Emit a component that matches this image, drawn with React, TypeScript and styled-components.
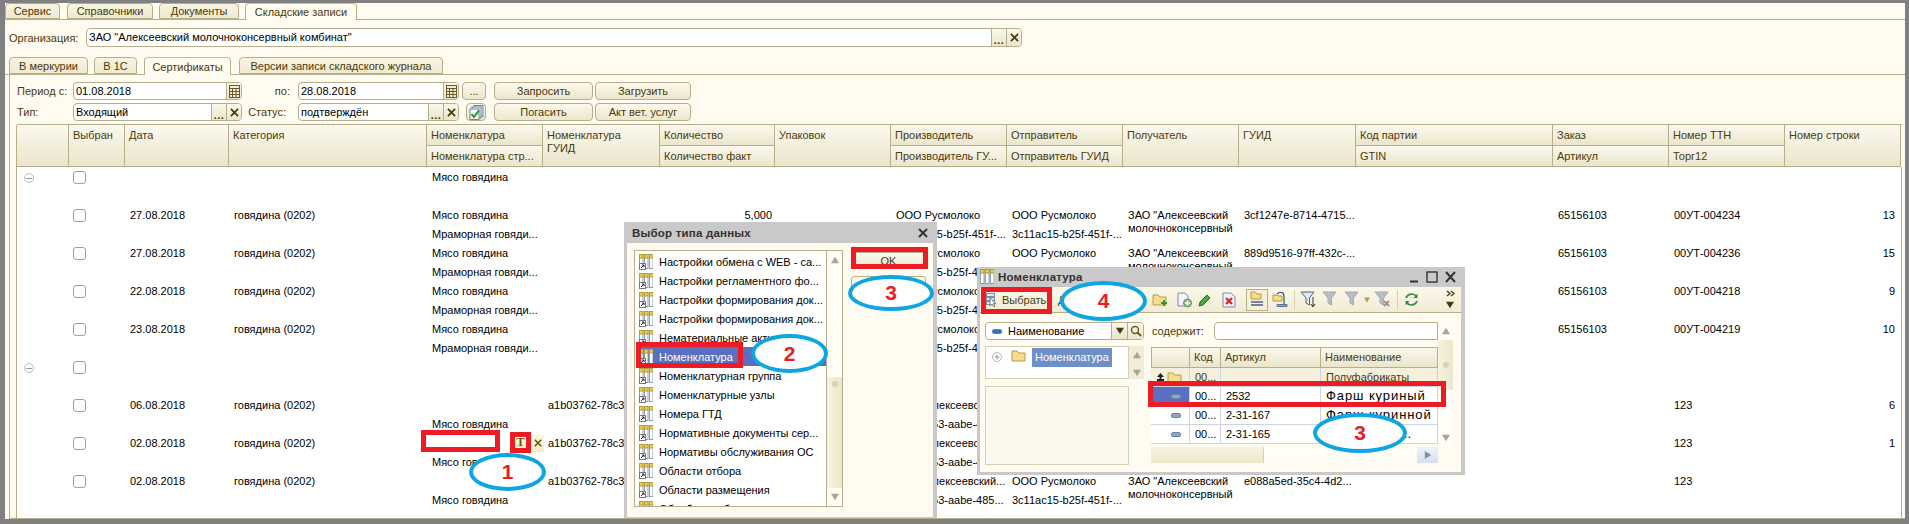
import React from 'react';
import styled, { createGlobalStyle } from 'styled-components';

const GlobalStyle = createGlobalStyle`
    html, body {
        margin: 0;
        padding: 0;
        background: #808080;
    }
    body {
        font-family: "Liberation Sans", Arial, sans-serif;
        font-size: 11px;
        color: #000;
    }
`;

const LINE = '#b7ae8c';
const BROWN = '#4c3a0a';
const CREAM = '#fffbf0';

const Page = styled.div`
    position: relative;
    width: 1909px;
    height: 524px;
    box-sizing: border-box;
    padding: 3px 4px 5px 5px;
    background: #808080;
    display: flex;
    overflow: hidden;
`;

const Panel = styled.div`
    flex: 1;
    min-width: 0;
    background: ${CREAM};
    display: flex;
    flex-direction: column;
`;

const TabStrip = styled.div<{ $indent?: number; $height: number }>`
    display: flex;
    align-items: flex-end;
    height: ${(p) => p.$height}px;
    margin-left: ${(p) => p.$indent ?? 0}px;
    flex-shrink: 0;
    position: relative;
`;

const TabLine = styled.div`
    height: 1px;
    background: ${LINE};
    flex-shrink: 0;
`;

const Tab = styled.div<{ $w: number; $gap: number; $active?: boolean }>`
    box-sizing: border-box;
    width: ${(p) => p.$w}px;
    margin-right: ${(p) => p.$gap}px;
    height: calc(100% + ${(p) => (p.$active ? 1 : 0)}px);
    margin-bottom: ${(p) => (p.$active ? -1 : 0)}px;
    border: 1px solid ${LINE};
    border-bottom: ${(p) => (p.$active ? 'none' : `1px solid ${LINE}`)};
    border-top: 1px solid ${(p) => (p.$active ? '#efb94f' : LINE)};
    border-radius: 4px 4px 0 0;
    background: ${(p) => (p.$active ? CREAM : 'linear-gradient(#f8f4e2, #efe9cf)')};
    color: ${BROWN};
    display: flex;
    align-items: center;
    justify-content: center;
    white-space: nowrap;
    position: relative;
    z-index: 1;
`;

const OrgRow = styled.div`
    display: flex;
    align-items: center;
    height: 19px;
    margin: 8px 0 10px 4px;
    flex-shrink: 0;
`;

const OrgLabel = styled.div`
    width: 77px;
    color: ${BROWN};
`;

const Field = styled.div<{ $w?: number }>`
    box-sizing: border-box;
    width: ${(p) => (p.$w ? `${p.$w}px` : 'auto')};
    height: 100%;
    background: #fff;
    border: 1px solid ${LINE};
    border-radius: 4px;
    display: flex;
    align-items: stretch;
    overflow: hidden;
`;

const FieldText = styled.div`
    flex: 1;
    padding-left: 2px;
    line-height: 16px;
    white-space: nowrap;
    overflow: hidden;
`;

const FieldBtn = styled.div`
    width: 15px;
    flex-shrink: 0;
    box-sizing: border-box;
    background: linear-gradient(#fbf8ea, #ebe5cc);
    border-left: 1px solid ${LINE};
    color: ${BROWN};
    display: flex;
    align-items: center;
    justify-content: center;
    font-weight: bold;
`;

const Dots = styled.span`
    margin-top: 5px;
    line-height: 10px;
    letter-spacing: 0.5px;
`;

const TabBody = styled.div`
    flex: 1;
    min-height: 0;
    margin-left: 4px;
    border-left: 1px solid ${LINE};
    border-bottom: 1px solid ${LINE};
    padding: 7px 3px 0 6px;
    display: flex;
    flex-direction: column;
`;

const Form = styled.div`
    display: grid;
    grid-template-columns: 56px 169px 56px 161px 35px 101px 98px;
    grid-auto-rows: 18px;
    row-gap: 3px;
    margin: 0 0 4px 1px;
    flex-shrink: 0;
    align-items: stretch;
`;

const FormLabel = styled.div<{ $endPad?: number }>`
    color: ${BROWN};
    line-height: 18px;
    text-align: ${(p) => (p.$endPad ? 'right' : 'left')};
    padding-right: ${(p) => p.$endPad ?? 0}px;
`;

const PushBtn = styled.div<{ $small?: boolean }>`
    box-sizing: border-box;
    border: 1px solid ${LINE};
    border-radius: 4px;
    background: linear-gradient(#fcf9ec, #ece6ce);
    color: ${BROWN};
    display: flex;
    align-items: center;
    justify-content: center;
    margin: ${(p) => (p.$small ? '0 8px 0 3px' : '0 2px 0 0')};
    white-space: nowrap;
`;

const IconSlot = styled.div`
    margin: 0 8px 0 7px;
    border: 1px solid ${LINE};
    border-radius: 4px;
    background: linear-gradient(#fcf9ec, #ece6ce);
    display: flex;
    align-items: center;
    justify-content: center;
`;

const COLUMNS = '52px 56px 104px 198px 116px 117px 115px 116px 116px 116px 116px 117px 197px 116px 116px 116px';

const Table = styled.div`
    flex: 1;
    min-height: 0;
    border-left: 1px solid ${LINE};
    display: flex;
    flex-direction: column;
    background: #fff;
`;

const Header = styled.div`
    display: grid;
    grid-template-columns: ${COLUMNS};
    grid-template-rows: 21px 21px;
    border-top: 1px solid ${LINE};
    margin-top: -1px;
    flex-shrink: 0;
`;

const HeadCell = styled.div<{ $span?: boolean }>`
    box-sizing: border-box;
    grid-row: ${(p) => (p.$span ? 'span 2' : 'auto')};
    border-right: 1px solid ${LINE};
    border-bottom: 1px solid ${LINE};
    background: linear-gradient(#fbf9ef, #ebe5cb);
    color: ${BROWN};
    padding: ${(p) => (p.$span ? '4px 4px 0 4px' : '0 4px')};
    line-height: ${(p) => (p.$span ? '13px' : '20px')};
    overflow: hidden;
    white-space: pre-line;
`;

const Body = styled.div`
    flex: 1;
    border-right: 1px solid ${LINE};
    width: 1884px;
    overflow: hidden;
`;

const Row = styled.div`
    display: grid;
    grid-template-columns: ${COLUMNS};
    height: 38px;
`;

const Cell = styled.div<{ $right?: number; $wrap?: boolean }>`
    box-sizing: border-box;
    padding: ${(p) => (p.$wrap ? '4px' : '1px')} ${(p) => p.$right ?? 2}px 0 5px;
    text-align: ${(p) => (p.$right ? 'right' : 'left')};
    overflow: hidden;
`;

const Line = styled.div<{ $wrap?: boolean }>`
    height: ${(p) => (p.$wrap ? 13 : 19)}px;
    line-height: ${(p) => (p.$wrap ? 13 : 19)}px;
    white-space: nowrap;
`;

const ToggleCell = styled.div`
    padding: 6px 0 0 7px;
`;

const Toggle = styled.div`
    box-sizing: border-box;
    width: 10px;
    height: 10px;
    border: 1px solid #b9b9b9;
    border-radius: 50%;
    display: flex;
    align-items: center;
    justify-content: center;
    &::before {
        content: '';
        width: 6px;
        height: 1px;
        background: #9a9a9a;
    }
`;

const CheckCell = styled.div`
    padding: 4px 0 0 4px;
`;

const CheckBox = styled.div`
    box-sizing: border-box;
    width: 13px;
    height: 13px;
    background: #fff;
    border: 1px solid #a99f7d;
    border-radius: 3px;
`;

/* окно выбора типа */
const Dialog = styled.div<{ $x: number; $y: number; $w: number; $h: number; $bottom: number }>`
    position: absolute;
    left: ${(p) => p.$x}px;
    top: ${(p) => p.$y}px;
    width: ${(p) => p.$w}px;
    height: ${(p) => p.$h}px;
    box-sizing: border-box;
    background: #c9c9c9;
    display: flex;
    flex-direction: column;
    padding: 0 4px ${(p) => p.$bottom}px 3px;
`;

const TitleBar = styled.div<{ $h: number; $endPad: number }>`
    height: ${(p) => p.$h}px;
    flex-shrink: 0;
    display: flex;
    align-items: center;
    font-weight: bold;
    color: #333;
    font-size: 11.5px;
    letter-spacing: 0.2px;
    padding-right: ${(p) => p.$endPad}px;
    svg {
        flex-shrink: 0;
    }
`;

const TitleText = styled.div<{ $pad: number }>`
    flex: 1;
    white-space: nowrap;
    padding-left: ${(p) => p.$pad}px;
`;

const DialogBody = styled.div`
    flex: 1;
    min-height: 0;
    background: ${CREAM};
    display: flex;
    padding: 7px 0 10px 7px;
`;

const ListFrame = styled.div`
    box-sizing: border-box;
    width: 209px;
    border: 1px solid ${LINE};
    background: ${CREAM};
    display: flex;
    overflow: hidden;
`;

const ListItems = styled.div`
    flex: 1;
    min-width: 0;
    padding: 1px 0 0 4px;
    background: #fff;
`;

const ListItem = styled.div<{ $selected?: boolean }>`
    height: 19px;
    display: flex;
    align-items: center;
    gap: 6px;
    white-space: nowrap;
    color: ${(p) => (p.$selected ? '#fff' : '#000')};
    background: ${(p) => (p.$selected ? '#5a6fc0' : 'transparent')};
    margin-left: ${(p) => (p.$selected ? -2 : 0)}px;
    padding-left: ${(p) => (p.$selected ? 2 : 0)}px;
    svg {
        flex-shrink: 0;
    }
`;

const VScroll = styled.div`
    width: 16px;
    flex-shrink: 0;
    box-sizing: border-box;
    border-left: 1px solid ${LINE};
    background: #fffdf6;
    display: flex;
    flex-direction: column;
    align-items: stretch;
`;

const ScrollBtn = styled.div`
    height: 18px;
    flex-shrink: 0;
    display: flex;
    align-items: center;
    justify-content: center;
`;

const ScrollTrack = styled.div<{ $before?: number; $height?: number; $center?: boolean }>`
    flex: ${(p) => (p.$height ? '0 0 auto' : '1')};
    height: ${(p) => (p.$height ? `${p.$height}px` : 'auto')};
    margin-top: ${(p) => p.$before ?? 0}px;
    background: linear-gradient(90deg, #f7f3df, #ece6ca);
    display: flex;
    align-items: ${(p) => (p.$center ? 'center' : 'flex-start')};
    justify-content: center;
    padding-top: ${(p) => (p.$center ? 0 : 4)}px;
    min-height: 0;
`;

const ScrollDot = styled.div`
    width: 6px;
    height: 6px;
    border-radius: 50%;
    background: #d6d1bb;
`;

const ScrollGap = styled.div`
    flex: 1;
`;

const SideButtons = styled.div`
    flex: 1;
    display: flex;
    flex-direction: column;
    padding: 2px 7px 0 8px;
    gap: 7px;
`;

const DialogBtn = styled.div`
    height: 17px;
    box-sizing: border-box;
    border: 1px solid ${LINE};
    border-radius: 3px;
    background: linear-gradient(#fcf9ec, #ece6ce);
    color: ${BROWN};
    display: flex;
    align-items: center;
    justify-content: center;
`;

/* окно номенклатуры */
const Toolbar = styled.div`
    height: 25px;
    flex-shrink: 0;
    background: linear-gradient(#fbf8e9, #f1ecd6);
    border-bottom: 1px solid ${LINE};
    display: flex;
    align-items: center;
    padding-left: 3px;
    color: ${BROWN};
`;

const ChooseBtn = styled.div`
    width: 69px;
    display: flex;
    align-items: center;
    gap: 5px;
    padding-left: 3px;
`;

const ActionsLabel = styled.div`
    width: 90px;
    padding-left: 3px;
`;

const ToolIcon = styled.div<{ $w: number; $pressed?: boolean }>`
    box-sizing: border-box;
    width: ${(p) => p.$w}px;
    height: 22px;
    display: flex;
    align-items: center;
    justify-content: center;
    border: ${(p) => (p.$pressed ? `1px solid ${LINE}` : 'none')};
    background: ${(p) => (p.$pressed ? '#f7f0d5' : 'transparent')};
    margin-left: ${(p) => (p.$pressed ? 2 : 0)}px;
`;

const ToolSep = styled.div`
    width: 1px;
    height: 20px;
    background: #d5cfb3;
    margin: 0 2px;
`;

const Overflow = styled.div`
    margin-left: auto;
    width: 22px;
    display: flex;
    flex-direction: column;
    align-items: center;
    gap: 4px;
`;

const WindowBody = styled.div`
    flex: 1;
    min-height: 0;
    background: ${CREAM};
    display: grid;
    grid-template-columns: 159px 302px;
    column-gap: 7px;
    padding: 9px 0 0 5px;
`;

const LeftPane = styled.div`
    display: flex;
    flex-direction: column;
`;

const SearchSelect = styled.div`
    box-sizing: border-box;
    height: 18px;
    border: 1px solid ${LINE};
    border-radius: 4px;
    background: #fff;
    display: flex;
    align-items: stretch;
    overflow: hidden;
    flex-shrink: 0;
`;

const SearchName = styled.div`
    flex: 1;
    display: flex;
    align-items: center;
    gap: 6px;
    padding-left: 6px;
`;

const SearchBtn = styled.div`
    width: 15px;
    background: linear-gradient(#fbf8ea, #ebe5cc);
    border-left: 1px solid ${LINE};
    display: flex;
    align-items: center;
    justify-content: center;
`;

const TreeBox = styled.div`
    margin-top: 6px;
    height: 33px;
    display: flex;
    flex-shrink: 0;
`;

const TreeFrame = styled.div`
    box-sizing: border-box;
    flex: 1;
    border: 1px solid #d5cfb3;
    background: #fff;
    display: flex;
    align-items: flex-start;
    padding: 1px 0 0 6px;
    height: 100%;
`;

const TreeExpander = styled.span`
    margin: 4px 9px 0 0;
`;

const TreeLabel = styled.div`
    background: #6d8fc8;
    color: #fff;
    height: 19px;
    line-height: 19px;
    padding: 0 3px;
    margin-left: 4px;
`;

const TreeScroll = styled.div`
    width: 15px;
    display: flex;
    flex-direction: column;
    background: #f1ecd6;
`;

const EmptyPane = styled.div`
    box-sizing: border-box;
    margin-top: 7px;
    height: 79px;
    border: 1px solid #d5cfb3;
    background: #fbf8ee;
    flex-shrink: 0;
    margin-right: 15px;
`;

const RightPane = styled.div`
    display: grid;
    grid-template-columns: 287px 15px;
    grid-template-rows: 125px 16px;
`;

const RightMain = styled.div`
    display: flex;
    flex-direction: column;
`;

const ContainsRow = styled.div`
    height: 18px;
    display: flex;
    align-items: center;
    color: ${BROWN};
    margin-bottom: 7px;
    flex-shrink: 0;
`;

const ContainsLabel = styled.div`
    width: 63px;
    padding-left: 1px;
    box-sizing: border-box;
`;

const ContainsInput = styled.div`
    flex: 1;
    height: 18px;
    box-sizing: border-box;
    border: 1px solid ${LINE};
    border-radius: 4px 0 0 4px;
    background: #fff;
`;

const ITEM_COLUMNS = '39px 31px 100px 117px';

const ItemHead = styled.div`
    display: grid;
    grid-template-columns: ${ITEM_COLUMNS};
    height: 21px;
    flex-shrink: 0;
`;

const ItemHeadCell = styled.div`
    box-sizing: border-box;
    border-right: 1px solid ${LINE};
    border-top: 1px solid ${LINE};
    border-bottom: 1px solid ${LINE};
    background: linear-gradient(#fbf8ea, #ebe5cc);
    color: ${BROWN};
    line-height: 19px;
    padding-left: 4px;
    &:first-child {
        border-left: 1px solid ${LINE};
    }
`;

const ItemRow = styled.div<{ $group?: boolean }>`
    display: grid;
    grid-template-columns: ${ITEM_COLUMNS};
    height: 19px;
    background: ${(p) => (p.$group ? '#f4f0dc' : '#fff')};
    flex-shrink: 0;
`;

const ItemCell = styled.div<{ $brown?: boolean; $wide?: boolean }>`
    box-sizing: border-box;
    border-right: 1px solid #cbd5e0;
    border-bottom: 1px solid #cbd5e0;
    color: ${(p) => (p.$brown ? BROWN : '#000')};
    line-height: 18px;
    padding-left: 5px;
    white-space: nowrap;
    overflow: hidden;
    font-size: ${(p) => (p.$wide ? 13 : 11)}px;
    letter-spacing: ${(p) => (p.$wide ? 0.9 : 0)}px;
    display: flex;
    align-items: center;
`;

const IconCell = styled(ItemCell)<{ $selected?: boolean; $end: number }>`
    background: ${(p) => (p.$selected ? '#5a6fc0' : 'transparent')};
    justify-content: flex-end;
    gap: 3px;
    padding: 0 ${(p) => p.$end}px 0 0;
`;

const HScroll = styled.div`
    grid-column: 1 / 3;
    display: flex;
    align-items: stretch;
    background: #fffdf6;
    width: 287px;
`;

const HThumb = styled.div`
    width: 112px;
    background: linear-gradient(#f7f3df, #ece6ca);
    border-right: 1px solid #d5cfb3;
`;

const HArrow = styled.div`
    width: 21px;
    margin-left: auto;
    background: linear-gradient(#eef3fa, #d4e0f0);
    display: flex;
    align-items: center;
    justify-content: center;
`;

const RightScroll = styled.div`
    display: flex;
    flex-direction: column;
    background: #fffdf6;
`;

/* пометки поверх скриншота */
const RedFrame = styled.div<{ $x: number; $y: number; $w: number; $h: number; $fill?: boolean }>`
    position: absolute;
    left: ${(p) => p.$x}px;
    top: ${(p) => p.$y}px;
    width: ${(p) => p.$w}px;
    height: ${(p) => p.$h}px;
    box-sizing: border-box;
    border: 5px solid #ed1c24;
    background: ${(p) => (p.$fill ? '#fff' : 'transparent')};
`;

const Bubble = styled.div<{ $x: number; $y: number; $w: number; $h: number }>`
    position: absolute;
    left: ${(p) => p.$x}px;
    top: ${(p) => p.$y}px;
    width: ${(p) => p.$w}px;
    height: ${(p) => p.$h}px;
    box-sizing: border-box;
    border: 4px solid #0ea5e4;
    border-radius: 50%;
    background: #fff;
    display: flex;
    align-items: center;
    justify-content: center;
    color: #ed1c24;
    font-size: 21px;
    font-weight: bold;
`;

const CellTool = styled.div<{ $x: number; $y: number; $w: number; $h: number }>`
    position: absolute;
    left: ${(p) => p.$x}px;
    top: ${(p) => p.$y}px;
    width: ${(p) => p.$w}px;
    height: ${(p) => p.$h}px;
    background: linear-gradient(#fdf9e4, #f3ecc8);
    display: flex;
    align-items: center;
    justify-content: center;
    color: #6b5410;
    font-family: "Liberation Serif", serif;
    font-weight: bold;
    font-size: 12px;
    line-height: 11px;
`;

const CloseIcon = ({ size = 9, color = BROWN, width = 2 }: { size?: number; color?: string; width?: number }) => (
    <svg width={size} height={size} viewBox="0 0 10 10">
        <path d="M1 1 L9 9 M9 1 L1 9" stroke={color} strokeWidth={width} fill="none" />
    </svg>
);

const CalendarIcon = () => (
    <svg width="11" height="13" viewBox="0 0 11 13">
        <rect x="0.5" y="0.5" width="10" height="12" fill="#f3eeda" stroke="#6b5a28" />
        <path d="M0 3.5H11M0 6.5H11M0 9.5H11M3.5 3V13M7 3V13" stroke="#6b5a28" strokeWidth="1" />
    </svg>
);

const StackIcon = () => (
    <svg width="15" height="15" viewBox="0 0 15 15">
        <rect x="5" y="0.5" width="9" height="11" fill="#dfe8f2" stroke="#6d84a8" />
        <rect x="3" y="2" width="9" height="11" fill="#eef3f8" stroke="#6d84a8" />
        <rect x="1" y="4" width="9" height="10.5" fill="#fff" stroke="#6d84a8" />
        <path d="M2.5 9 L5 12 L10 5.5" stroke="#38a030" strokeWidth="2.2" fill="none" />
    </svg>
);

const TableIcon = ({ shortcut = true }: { shortcut?: boolean }) => (
    <svg width="14" height="16" viewBox="0 0 14 16">
        {[0, 5, 10].map((x) => (
            <g key={x}>
                <rect x={x + 0.5} y="0.5" width="3.5" height="14" fill="#fff" stroke="#8d9fb5" />
                <rect x={x + 0.5} y="0.5" width="3.5" height="3.5" fill="#f0cf4a" stroke="#b59c3a" />
            </g>
        ))}
        {shortcut && (
            <g>
                <rect x="0.5" y="9.5" width="6" height="6" fill="#fff" stroke="#777" />
                <path d="M2 14 L5 11 M3 11 H5 V13" stroke="#222" fill="none" />
            </g>
        )}
    </svg>
);

const Triangle = ({ dir, color = '#a9a58f', size = 8 }: { dir: 'up' | 'down' | 'right'; color?: string; size?: number }) => {
    const points = { up: '5,1 10,9 0,9', down: '0,1 10,1 5,9', right: '1,0 9,5 1,10' }[dir];
    return (
        <svg width={size} height={size} viewBox="0 0 10 10">
            <polygon points={points} fill={color} />
        </svg>
    );
};

const UpArrow = () => (
    <svg width="7" height="8" viewBox="0 0 7 8">
        <path d="M3.5 0 L7 4 H4.5 V6 H7 V8 H0 V6 H2.5 V4 H0 Z" fill="#222" />
    </svg>
);

const FolderIcon = ({ plus = false }: { plus?: boolean }) => (
    <svg width="17" height="15" viewBox="0 0 17 15">
        <path d="M1 3 H6 L8 5 H14 V13 H1 Z" fill="#f6dc8c" stroke="#b8994a" />
        {plus && <path d="M12 8 V14 M9 11 H15" stroke="#2e9a33" strokeWidth="2" />}
    </svg>
);

const DocPlusIcon = () => (
    <svg width="17" height="16" viewBox="0 0 17 16">
        <path d="M2 1 H9 L12 4 V14 H2 Z" fill="#f3f6fa" stroke="#7e8ea3" />
        <circle cx="11.5" cy="11" r="4" fill="#8dbb8d" stroke="#6a8d6a" />
        <path d="M11.5 8.5 V13.5 M9 11 H14" stroke="#fff" strokeWidth="1.4" />
    </svg>
);

const PencilIcon = () => (
    <svg width="14" height="14" viewBox="0 0 14 14">
        <path d="M2 9 L9 2 L12 5 L5 12 L1 13 Z" fill="#4aa83c" stroke="#2b6f2a" />
    </svg>
);

const DeleteDocIcon = () => (
    <svg width="14" height="16" viewBox="0 0 14 16">
        <path d="M1 1 H9 L13 5 V15 H1 Z" fill="#eef3f8" stroke="#7e8ea3" />
        <path d="M4 6 L10 12 M10 6 L4 12" stroke="#d8232a" strokeWidth="2.2" />
    </svg>
);

const FolderTreeIcon = () => (
    <svg width="16" height="17" viewBox="0 0 16 17">
        <path d="M2 1 H6 L8 3 H12 V8 H2 Z" fill="#f6dc8c" stroke="#b8994a" />
        <path d="M2 11 H14 M2 14 H14" stroke="#6d84a8" strokeWidth="2" />
    </svg>
);

const FolderUpIcon = () => (
    <svg width="16" height="17" viewBox="0 0 16 17">
        <path d="M1 4 H5 L6 5 H10 V10 H1 Z" fill="#f6dc8c" stroke="#b8994a" />
        <path d="M5 3 C8 0 12 1 12 5 V13" stroke="#33567d" strokeWidth="1.2" fill="none" />
        <path d="M5 13.5 H15 V15.5 H5 Z" fill="#8ea6c4" stroke="#5a7494" />
    </svg>
);

const FilterIcon = ({ color = '#b8bec4', line = '#a4aab0', extra }: { color?: string; line?: string; extra?: React.ReactNode }) => (
    <svg width="17" height="17" viewBox="0 0 17 17">
        <path d="M1 1 H14 L9.5 7 V14 L6 12 V7 Z" fill={color} stroke={line} />
        {extra}
    </svg>
);

const RefreshIcon = () => (
    <svg width="15" height="15" viewBox="0 0 15 15">
        <path d="M2 6 A6 6 0 0 1 12.5 4.5 M13 9 A6 6 0 0 1 2.5 10.5" stroke="#2e8f3a" strokeWidth="1.6" fill="none" />
        <path d="M13.5 1.5 V6 H9.5 Z M1.5 13.5 V9 H5.5 Z" fill="#2e8f3a" />
    </svg>
);

const SelectIcon = () => (
    <svg width="11" height="14" viewBox="0 0 11 14">
        <rect x="0.5" y="0.5" width="8" height="3" fill="#dfe8f2" stroke="#7e8ea3" />
        <rect x="0.5" y="4.5" width="8" height="3" fill="#dfe8f2" stroke="#7e8ea3" />
        <rect x="0.5" y="8.5" width="8" height="3" fill="#dfe8f2" stroke="#7e8ea3" />
        <path d="M4 5 V13 L6 11 L8 14 L9 13 L7.5 10.5 H10 Z" fill="#fff" stroke="#555" strokeWidth="0.7" />
    </svg>
);

const ChevronsIcon = () => (
    <svg width="9" height="7" viewBox="0 0 9 7">
        <path d="M1 1 L4 3.5 L1 6 M5 1 L8 3.5 L5 6" stroke={BROWN} strokeWidth="1.3" fill="none" />
    </svg>
);

const MinusChip = ({ color = '#8fa7c6', w = 10 }: { color?: string; w?: number }) => (
    <svg width={w} height="5" viewBox={`0 0 ${w} 5`}>
        <rect x="0.5" y="0.5" width={w - 1} height="4" rx="1.5" fill={color} stroke="#6d84a8" />
    </svg>
);

const Magnifier = () => (
    <svg width="12" height="12" viewBox="0 0 12 12">
        <circle cx="5" cy="5" r="3.5" fill="none" stroke="#6b5a28" strokeWidth="1.4" />
        <path d="M7.5 7.5 L11 11" stroke="#6b5a28" strokeWidth="2" />
    </svg>
);

const PlusCircle = () => (
    <svg width="10" height="10" viewBox="0 0 10 10">
        <circle cx="5" cy="5" r="4.5" fill="#fff" stroke="#b9b9b9" />
        <path d="M5 2.5 V7.5 M2.5 5 H7.5" stroke="#9a9a9a" />
    </svg>
);

type GridRow = {
    group?: boolean;
    date?: string;
    nom?: string;
    nom2?: string;
    guid?: string;
    qty?: string;
    maker?: string;
    maker2?: string;
    sender?: string;
    sender2?: string;
    receiver?: boolean;
    id?: string;
    order?: string;
    ttn?: string;
    num?: string;
};

const CATEGORY = 'говядина (0202)';
const MEAT = 'Мясо говядина';
const MARBLED = 'Мраморная говяди...';
const RUS = 'ООО Русмолоко';
const RUS_GUID = '3c11ac15-b25f-451f-...';
const ALEX = 'ЗАО "Алексеевский...';
const ALEX_GUID = '3c703a53-aabe-485...';
const NOM_GUID = 'a1b03762-78c3-4...';

const rows: GridRow[] = [
    { group: true, nom: MEAT },
    { date: '27.08.2018', nom: MEAT, nom2: MARBLED, qty: '5,000', maker: RUS, maker2: RUS_GUID, sender: RUS, sender2: RUS_GUID, receiver: true, id: '3cf1247e-8714-4715...', order: '65156103', ttn: '00УТ-004234', num: '13' },
    { date: '27.08.2018', nom: MEAT, nom2: MARBLED, maker: RUS, maker2: RUS_GUID, sender: RUS, sender2: RUS_GUID, receiver: true, id: '889d9516-97ff-432c-...', order: '65156103', ttn: '00УТ-004236', num: '15' },
    { date: '22.08.2018', nom: MEAT, nom2: MARBLED, maker: RUS, maker2: RUS_GUID, sender: RUS, sender2: RUS_GUID, order: '65156103', ttn: '00УТ-004218', num: '9' },
    { date: '23.08.2018', nom: MEAT, nom2: MARBLED, maker: RUS, maker2: RUS_GUID, sender: RUS, sender2: RUS_GUID, order: '65156103', ttn: '00УТ-004219', num: '10' },
    { group: true },
    { date: '06.08.2018', nom2: MEAT, guid: NOM_GUID, maker: ALEX, maker2: ALEX_GUID, ttn: '123', num: '6' },
    { date: '02.08.2018', nom2: MEAT, guid: NOM_GUID, maker: ALEX, maker2: ALEX_GUID, ttn: '123', num: '1' },
    { date: '02.08.2018', nom2: MEAT, guid: NOM_GUID, maker: ALEX, maker2: ALEX_GUID, sender: RUS, sender2: RUS_GUID, receiver: true, id: 'e088a5ed-35c4-4d2...', ttn: '123' },
];

const typeItems = [
    'Настройки обмена с WEB - са...',
    'Настройки регламентного фо...',
    'Настройки формирования док...',
    'Настройки формирования док...',
    'Нематериальные активы и ...',
    'Номенклатура',
    'Номенклатурная группа',
    'Номенклатурные узлы',
    'Номера ГТД',
    'Нормативные документы сер...',
    'Нормативы обслуживания ОС',
    'Области отбора',
    'Области размещения',
    'Обработки обслуживания ...',
];

const TwoLines = ({ a, b, right }: { a?: string; b?: string; right?: number }) => (
    <Cell $right={right}>
        <Line>{a}</Line>
        <Line>{b}</Line>
    </Cell>
);

const App = () => (
    <Page>
        <GlobalStyle />
        <Panel>
            <TabStrip $height={16}>
                <Tab $w={55} $gap={7}>Сервис</Tab>
                <Tab $w={86} $gap={6}>Справочники</Tab>
                <Tab $w={80} $gap={6}>Документы</Tab>
                <Tab $w={112} $gap={0} $active>Складские записи</Tab>
            </TabStrip>
            <TabLine />
            <OrgRow>
                <OrgLabel>Организация:</OrgLabel>
                <Field $w={936}>
                    <FieldText>ЗАО "Алексеевский молочноконсервный комбинат"</FieldText>
                    <FieldBtn><Dots>...</Dots></FieldBtn>
                    <FieldBtn><CloseIcon /></FieldBtn>
                </Field>
            </OrgRow>
            <TabStrip $indent={4} $height={17}>
                <Tab $w={79} $gap={6}>В меркурии</Tab>
                <Tab $w={43} $gap={7}>В 1С</Tab>
                <Tab $w={87} $gap={8} $active>Сертификаты</Tab>
                <Tab $w={204} $gap={0}>Версии записи складского журнала</Tab>
            </TabStrip>
            <TabLine />
            <TabBody>
                <Form>
                    <FormLabel>Период с:</FormLabel>
                    <Field>
                        <FieldText>01.08.2018</FieldText>
                        <FieldBtn><CalendarIcon /></FieldBtn>
                    </Field>
                    <FormLabel $endPad={8}>по:</FormLabel>
                    <Field>
                        <FieldText>28.08.2018</FieldText>
                        <FieldBtn><CalendarIcon /></FieldBtn>
                    </Field>
                    <PushBtn $small>...</PushBtn>
                    <PushBtn>Запросить</PushBtn>
                    <PushBtn>Загрузить</PushBtn>

                    <FormLabel>Тип:</FormLabel>
                    <Field>
                        <FieldText>Входящий</FieldText>
                        <FieldBtn><Dots>...</Dots></FieldBtn>
                        <FieldBtn><CloseIcon /></FieldBtn>
                    </Field>
                    <FormLabel $endPad={12}>Статус:</FormLabel>
                    <Field>
                        <FieldText>подтверждён</FieldText>
                        <FieldBtn><Dots>...</Dots></FieldBtn>
                        <FieldBtn><CloseIcon /></FieldBtn>
                    </Field>
                    <IconSlot><StackIcon /></IconSlot>
                    <PushBtn>Погасить</PushBtn>
                    <PushBtn>Акт вет. услуг</PushBtn>
                </Form>
                <Table>
                    <Header>
                        <HeadCell $span />
                        <HeadCell $span>Выбран</HeadCell>
                        <HeadCell $span>Дата</HeadCell>
                        <HeadCell $span>Категория</HeadCell>
                        <HeadCell>Номенклатура</HeadCell>
                        <HeadCell $span>{'Номенклатура\nГУИД'}</HeadCell>
                        <HeadCell>Количество</HeadCell>
                        <HeadCell $span>Упаковок</HeadCell>
                        <HeadCell>Производитель</HeadCell>
                        <HeadCell>Отправитель</HeadCell>
                        <HeadCell $span>Получатель</HeadCell>
                        <HeadCell $span>ГУИД</HeadCell>
                        <HeadCell>Код партии</HeadCell>
                        <HeadCell>Заказ</HeadCell>
                        <HeadCell>Номер ТТН</HeadCell>
                        <HeadCell $span>Номер строки</HeadCell>
                        <HeadCell>Номенклатура стр...</HeadCell>
                        <HeadCell>Количество факт</HeadCell>
                        <HeadCell>Производитель ГУ...</HeadCell>
                        <HeadCell>Отправитель ГУИД</HeadCell>
                        <HeadCell>GTIN</HeadCell>
                        <HeadCell>Артикул</HeadCell>
                        <HeadCell>Торг12</HeadCell>
                    </Header>
                    <Body>
                        {rows.map((row, index) => (
                            <Row key={index}>
                                <ToggleCell>{row.group && <Toggle />}</ToggleCell>
                                <CheckCell><CheckBox /></CheckCell>
                                <TwoLines a={row.date} />
                                <TwoLines a={row.date ? CATEGORY : undefined} />
                                <TwoLines a={row.nom} b={row.nom2} />
                                <TwoLines a={row.guid} />
                                <TwoLines a={row.qty} right={3} />
                                <Cell />
                                <TwoLines a={row.maker} b={row.maker2} />
                                <TwoLines a={row.sender} b={row.sender2} />
                                <Cell $wrap>
                                    {row.receiver && (
                                        <>
                                            <Line $wrap>ЗАО "Алексеевский</Line>
                                            <Line $wrap>молочноконсервный</Line>
                                        </>
                                    )}
                                </Cell>
                                <TwoLines a={row.id} />
                                <Cell />
                                <TwoLines a={row.order} />
                                <TwoLines a={row.ttn} />
                                <TwoLines a={row.num} right={6} />
                            </Row>
                        ))}
                    </Body>
                </Table>
            </TabBody>
        </Panel>

        <RedFrame $x={421} $y={430} $w={79} $h={22} $fill />
        <RedFrame $x={510} $y={432} $w={21} $h={21} />
        <CellTool $x={515} $y={437} $w={11} $h={11}>T</CellTool>
        <CellTool $x={531} $y={434} $w={13} $h={18}><CloseIcon size={8} color="#6b5410" /></CellTool>
        <Bubble $x={469} $y={453} $w={77} $h={38}>1</Bubble>

        <Dialog $x={624} $y={222} $w={313} $h={296} $bottom={1}>
            <TitleBar $h={21} $endPad={5}>
                <TitleText $pad={5}>Выбор типа данных</TitleText>
                <CloseIcon size={10} color="#333" width={2} />
            </TitleBar>
            <DialogBody>
                <ListFrame>
                    <ListItems>
                        {typeItems.map((item, index) => (
                            <ListItem key={index} $selected={item === 'Номенклатура'}>
                                <TableIcon />
                                {item}
                            </ListItem>
                        ))}
                    </ListItems>
                    <VScroll>
                        <ScrollBtn><Triangle dir="up" /></ScrollBtn>
                        <ScrollTrack $before={108}><ScrollDot /></ScrollTrack>
                        <ScrollBtn><Triangle dir="down" /></ScrollBtn>
                    </VScroll>
                </ListFrame>
                <SideButtons>
                    <DialogBtn>OK</DialogBtn>
                    <DialogBtn>Отмена</DialogBtn>
                </SideButtons>
            </DialogBody>
        </Dialog>
        <RedFrame $x={636} $y={342} $w={107} $h={26} />
        <Bubble $x={751} $y={334} $w={77} $h={39}>2</Bubble>
        <RedFrame $x={851} $y={247} $w={77} $h={22} />
        <Bubble $x={848} $y={275} $w={86} $h={36}>3</Bubble>

        <Dialog $x={977} $y={267} $w={488} $h={208} $bottom={3}>
            <TitleBar $h={20} $endPad={5}>
                <TableIcon shortcut={false} />
                <TitleText $pad={4}>Номенклатура</TitleText>
                <svg width="46" height="12" viewBox="0 0 46 12">
                    <path d="M0 10.5 H8" stroke="#333" strokeWidth="2" />
                    <rect x="17" y="1" width="10" height="10" fill="none" stroke="#333" strokeWidth="1.4" />
                    <path d="M36 1 L45 11 M45 1 L36 11" stroke="#333" strokeWidth="2" />
                </svg>
            </TitleBar>
            <Toolbar>
                <ChooseBtn><SelectIcon />Выбрать</ChooseBtn>
                <ActionsLabel>Действия</ActionsLabel>
                <ToolIcon $w={24}><FolderIcon plus /></ToolIcon>
                <ToolIcon $w={24}><DocPlusIcon /></ToolIcon>
                <ToolIcon $w={18}><PencilIcon /></ToolIcon>
                <ToolIcon $w={30}><DeleteDocIcon /></ToolIcon>
                <ToolIcon $w={22} $pressed><FolderTreeIcon /></ToolIcon>
                <ToolIcon $w={24}><FolderUpIcon /></ToolIcon>
                <ToolSep />
                <ToolIcon $w={22}>
                    <FilterIcon color="#dfe6ee" line="#4f647f" extra={<path d="M13 6 V15 M11 13 L13 16 L15 13" stroke="#333" fill="none" />} />
                </ToolIcon>
                <ToolIcon $w={22}><FilterIcon /></ToolIcon>
                <ToolIcon $w={22}><FilterIcon /></ToolIcon>
                <ToolIcon $w={7}><Triangle dir="down" color="#b79a4c" size={6} /></ToolIcon>
                <ToolIcon $w={25}>
                    <FilterIcon extra={<path d="M10 10 L15 15 M15 10 L10 15" stroke="#a58a8a" strokeWidth="1.8" />} />
                </ToolIcon>
                <ToolSep />
                <ToolIcon $w={22}><RefreshIcon /></ToolIcon>
                <Overflow>
                    <ChevronsIcon />
                    <Triangle dir="down" color={BROWN} size={8} />
                </Overflow>
            </Toolbar>
            <WindowBody>
                <LeftPane>
                    <SearchSelect>
                        <SearchName><MinusChip color="#2f6fc4" />Наименование</SearchName>
                        <SearchBtn><Triangle dir="down" color={BROWN} /></SearchBtn>
                        <SearchBtn><Magnifier /></SearchBtn>
                    </SearchSelect>
                    <TreeBox>
                        <TreeFrame>
                            <TreeExpander><PlusCircle /></TreeExpander>
                            <FolderIcon />
                            <TreeLabel>Номенклатура</TreeLabel>
                        </TreeFrame>
                        <TreeScroll>
                            <ScrollBtn><Triangle dir="up" /></ScrollBtn>
                            <ScrollBtn><Triangle dir="down" /></ScrollBtn>
                        </TreeScroll>
                    </TreeBox>
                    <EmptyPane />
                </LeftPane>
                <RightPane>
                    <RightMain>
                        <ContainsRow>
                            <ContainsLabel>содержит:</ContainsLabel>
                            <ContainsInput />
                        </ContainsRow>
                        <ItemHead>
                            <ItemHeadCell />
                            <ItemHeadCell>Код</ItemHeadCell>
                            <ItemHeadCell>Артикул</ItemHeadCell>
                            <ItemHeadCell>Наименование</ItemHeadCell>
                        </ItemHead>
                        <ItemRow $group>
                            <IconCell $end={5}><UpArrow /><FolderIcon /></IconCell>
                            <ItemCell $brown>00...</ItemCell>
                            <ItemCell />
                            <ItemCell $brown>Полуфабрикаты</ItemCell>
                        </ItemRow>
                        <ItemRow>
                            <IconCell $end={8} $selected><MinusChip /></IconCell>
                            <ItemCell>00...</ItemCell>
                            <ItemCell>2532</ItemCell>
                            <ItemCell $wide>Фарш куриный</ItemCell>
                        </ItemRow>
                        <ItemRow>
                            <IconCell $end={8}><MinusChip /></IconCell>
                            <ItemCell>00...</ItemCell>
                            <ItemCell>2-31-167</ItemCell>
                            <ItemCell $wide>Фарш куринной</ItemCell>
                        </ItemRow>
                        <ItemRow>
                            <IconCell $end={8}><MinusChip /></IconCell>
                            <ItemCell>00...</ItemCell>
                            <ItemCell>2-31-165</ItemCell>
                            <ItemCell $wide>Фарш говяж.</ItemCell>
                        </ItemRow>
                    </RightMain>
                    <RightScroll>
                        <ScrollBtn><Triangle dir="up" /></ScrollBtn>
                        <ScrollTrack $height={50} $center><ScrollDot /></ScrollTrack>
                        <ScrollGap />
                        <ScrollBtn><Triangle dir="down" /></ScrollBtn>
                    </RightScroll>
                    <HScroll>
                        <HThumb />
                        <HArrow><Triangle dir="right" color="#8a8f96" /></HArrow>
                    </HScroll>
                </RightPane>
            </WindowBody>
        </Dialog>
        <RedFrame $x={981} $y={287} $w={71} $h={27} />
        <Bubble $x={1060} $y={281} $w={87} $h={40}>4</Bubble>
        <RedFrame $x={1148} $y={381} $w={298} $h={26} />
        <Bubble $x={1313} $y={413} $w={94} $h={40}>3</Bubble>
    </Page>
);

export default App;
